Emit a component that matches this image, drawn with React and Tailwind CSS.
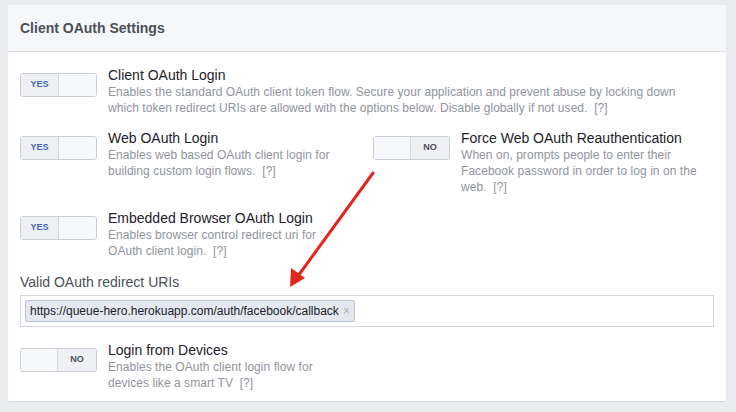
import React from "react";

function Toggle({ on }) {
  return (
    <div className="flex h-[24px] w-[77px] shrink-0 overflow-hidden rounded-[3px] border border-[#c9ccd1] text-[9px] font-bold">
      {on ? (
        <>
          <div className="flex w-[38px] items-center justify-center border-r border-[#d3d6db] bg-[#eef0f3] text-[#4267b2]">
            YES
          </div>
          <div className="flex-1 bg-[#f7f8fa]" />
        </>
      ) : (
        <>
          <div className="flex-1 border-r border-[#d3d6db] bg-[#f7f8fa]" />
          <div className="flex w-[38px] items-center justify-center bg-[#eef0f3] text-[#4b4f56]">
            NO
          </div>
        </>
      )}
    </div>
  );
}

function Setting({ on, title, lines }) {
  return (
    <div className="flex items-start gap-[11px]">
      <div className="pt-[7px]">
        <Toggle on={on} />
      </div>
      <div>
        <div className="text-[14px] leading-[18px] text-[#1d2129]">{title}</div>
        <div className="text-[12px] leading-[16px] tracking-[0.05px] text-[#90949c]">
          {lines.map((l, i) => (
            <div key={i} className="whitespace-nowrap">
              {l}
            </div>
          ))}
        </div>
      </div>
    </div>
  );
}

export default function App() {
  return (
    <div
      className="relative h-[412px] w-[736px] overflow-hidden bg-[#e9ebee] pl-[8px] pt-[5px]"
      style={{ fontFamily: '"Liberation Sans", Arial, sans-serif' }}
    >
      <div className="w-[718px] rounded-[2px] border-b border-[#d3d6db] bg-white">
        {/* HEADER */}
        <div className="flex h-[47px] items-center border-b border-[#dddfe2] bg-[#f6f7f9] px-3">
          <span className="text-[14px] font-bold text-[#4b4f56]">Client OAuth Settings</span>
        </div>

        {/* BODY */}
        <div className="px-3 pb-[10px] pt-[14px]">
          <Setting
            on
            title="Client OAuth Login"
            lines={[
              "Enables the standard OAuth client token flow. Secure your application and prevent abuse by locking down",
              <>which token redirect URIs are allowed with the options below. Disable globally if not used.&nbsp;&nbsp;[?]</>,
            ]}
          />

          <div className="mt-[13px] flex">
            <div className="w-[353px]">
              <Setting
                on
                title="Web OAuth Login"
                lines={[
                  "Enables web based OAuth client login for",
                  <>building custom login flows.&nbsp;&nbsp;[?]</>,
                ]}
              />
            </div>
            <Setting
              title="Force Web OAuth Reauthentication"
              lines={[
                "When on, prompts people to enter their",
                "Facebook password in order to log in on the",
                <>web.&nbsp;&nbsp;[?]</>,
              ]}
            />
          </div>

          <div className="mt-[14px]">
            <Setting
              on
              title="Embedded Browser OAuth Login"
              lines={[
                "Enables browser control redirect uri for",
                <>OAuth client login.&nbsp;&nbsp;[?]</>,
              ]}
            />
          </div>

          {/* REDIRECT URIS */}
          <div className="mt-[14px] text-[14px] leading-[18px] text-[#4b4f56]">Valid OAuth redirect URIs</div>
          <div className="mt-[4px] flex h-[32px] items-center border border-[#d3d6db] bg-white px-[4px]">
            <div className="flex h-[22px] items-center gap-[4px] rounded-[2px] border border-[#b9c2d4] bg-[#e3e8f1] pl-[4px] pr-[4px] text-[12px] text-[#1d2129]">
              https://queue-hero.herokuapp.com/auth/facebook/callback
              <span className="text-[12px] text-[#a8adb5]">×</span>
            </div>
          </div>

          <div className="mt-[14px]">
            <Setting
              title="Login from Devices"
              lines={[
                "Enables the OAuth client login flow for",
                <>devices like a smart TV&nbsp;&nbsp;[?]</>,
              ]}
            />
          </div>
        </div>
      </div>

      {/* ANNOTATION ARROW */}
      <svg className="pointer-events-none absolute left-0 top-0" width="736" height="412">
        <line x1="373" y1="173" x2="298" y2="276" stroke="#e2261c" strokeWidth="3" strokeLinecap="round" />
        <polygon points="290,287 291,268 305,278" fill="#e2261c" />
      </svg>
    </div>
  );
}
